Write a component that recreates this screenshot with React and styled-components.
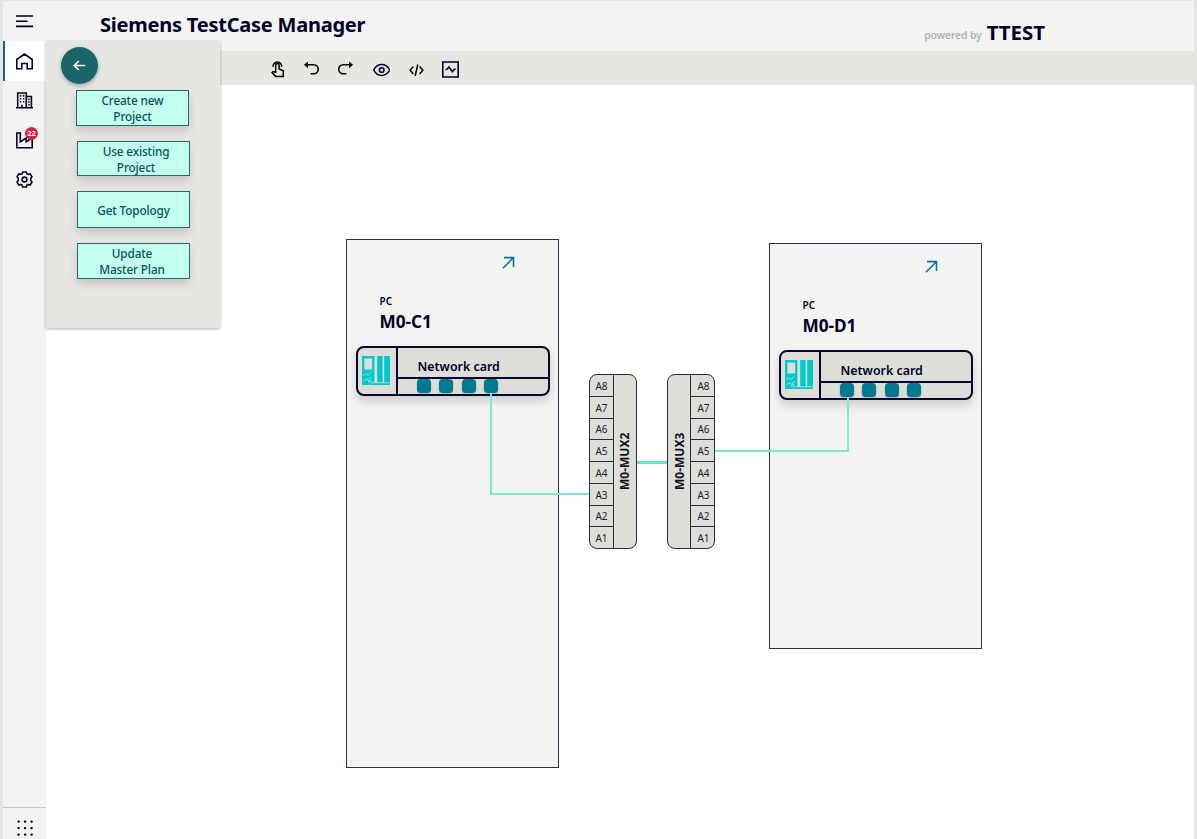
import React from "react";
import styled, { createGlobalStyle } from "styled-components";

const ink = "#000028";
const teal = "#007993";

const GlobalStyle = createGlobalStyle`
  * { box-sizing: border-box; }
  body {
    margin: 0;
    font-family: "Noto Sans", "Open Sans", sans-serif;
    color: ${ink};
    overflow: hidden;
  }
  svg { display: block; flex: none; }
`;

const Frame = styled.div`
  display: flex;
  width: 1197px;
  height: 839px;
  padding: 1px 3px 0;
  background: #e5e5e3;
`;

const Sidebar = styled.nav`
  display: flex;
  flex-direction: column;
  width: 43px;
  background: #f3f3f1;
`;

const NavItem = styled.div`
  position: relative;
  display: flex;
  align-items: center;
  justify-content: center;
  height: ${(p) => p.$height || 39.5}px;
  padding: 1px ${(p) => (p.$active ? 2 : 0)}px 0 0;
  border-left: ${(p) => (p.$active ? "2px solid #1b6468" : "0")};
  background: ${(p) => (p.$active ? "#fff" : "transparent")};
`;

const Badge = styled.span`
  position: absolute;
  top: 7px;
  left: 22px;
  width: 13px;
  height: 13px;
  border-radius: 50%;
  background: #d72339;
  color: #fff;
  font-size: 7.5px;
  font-weight: 700;
  line-height: 13px;
  text-align: center;
`;

const Apps = styled.div`
  display: flex;
  justify-content: center;
  height: 32px;
  margin-top: auto;
  padding: 12px 0 0 1px;
  border-top: 1px solid #c6c6c6;
`;

const Main = styled.div`
  position: relative;
  display: flex;
  flex-direction: column;
  flex: 1;
`;

const Header = styled.header`
  display: flex;
  justify-content: space-between;
  height: 50px;
  padding: 0 149px 0 54px;
  background: #f3f3f1;
`;

const Title = styled.h1`
  margin: 10px 0 0;
  font-size: 20px;
  font-weight: 700;
  line-height: 28px;
  letter-spacing: -0.23px;
  white-space: nowrap;
`;

const Brand = styled.div`
  display: flex;
  align-items: baseline;
  gap: 5px;
  margin-top: 17px;
  line-height: 28px;
  white-space: nowrap;
`;

const Powered = styled.span`
  position: relative;
  top: -1px;
  color: #b1b1b7;
  font-size: 10.3px;
  font-weight: 600;
  letter-spacing: -0.1px;
`;

const BrandName = styled.span`
  font-size: 20.4px;
  font-weight: 700;
`;

const Toolbar = styled.div`
  display: flex;
  align-items: center;
  gap: 17.4px;
  height: 34px;
  padding: 3px 0 0 223px;
  background: #e6e6e2;
`;

const Panel = styled.aside`
  position: absolute;
  top: 40px;
  left: 0;
  display: flex;
  flex-direction: column;
  width: 174px;
  height: 287px;
  padding: 6px 0 0 15px;
  background: #e6e6e2;
  box-shadow: 0 1px 3px rgba(0, 0, 40, 0.3);
`;

const BackButton = styled.button`
  display: flex;
  align-items: center;
  justify-content: center;
  width: 37px;
  height: 37px;
  margin: 0 0 6px;
  padding: 0;
  border: 0;
  border-radius: 50%;
  background: #1b6468;
  box-shadow: 0 2px 4px rgba(0, 0, 40, 0.28);
`;

const Actions = styled.div`
  display: flex;
  flex-direction: column;
  gap: 14.8px;
  padding-left: 16px;
`;

const ActionButton = styled.button`
  width: 113px;
  height: ${(p) => p.$height || 35.8}px;
  margin-left: ${(p) => p.$indent || 0}px;
  padding: 1px ${(p) => p.$right || 0}px 0 ${(p) => p.$left || 0}px;
  border: 1px solid #2b686b;
  background: #c2ffee;
  box-shadow: 0 5px 8px rgba(70, 40, 50, 0.17);
  color: #0b5259;
  font: 500 11.8px/16px "Noto Sans", sans-serif;
  letter-spacing: -0.16px;
  white-space: pre-line;
`;

const Canvas = styled.main`
  position: relative;
  flex: 1;
  background: #fff;
`;

const Wires = styled.svg`
  position: absolute;
  top: 0;
  left: 0;
`;

const PcNode = styled.section`
  position: absolute;
  left: ${(p) => p.$x}px;
  top: ${(p) => p.$y}px;
  width: 213px;
  height: ${(p) => p.$height}px;
  padding: 16px 0 0 9px;
  border: 1px solid #30304e;
  background: #f3f3f1;
`;

const OpenLink = styled.div`
  display: flex;
  justify-content: flex-end;
  height: 37px;
  padding-right: 43px;
`;

const Kind = styled.div`
  padding-left: 23.5px;
  font-size: 10px;
  font-weight: 600;
  line-height: 16px;
`;

const PcName = styled.div`
  padding: 1px 0 0 23.5px;
  font-size: 17.2px;
  font-weight: 700;
  line-height: 24px;
`;

const NetworkCard = styled.div`
  display: flex;
  width: 194px;
  height: 50px;
  margin-top: 12px;
  border: 2px solid #07072f;
  border-radius: 8px;
  background: #deded9;
  box-shadow: 0 5px 10px rgba(0, 0, 40, 0.16);
`;

const CardIcon = styled.div`
  width: 40px;
  padding: 8px 0 0 4px;
  border-right: 2px solid #07072f;
`;

const CardBody = styled.div`
  flex: 1;
`;

const CardName = styled.div`
  height: 31px;
  padding: 10px 0 0 19.5px;
  border-bottom: 2px solid #07072f;
  font-size: 12.4px;
  font-weight: 600;
  line-height: 18px;
  white-space: nowrap;
`;

const Ports = styled.div`
  display: flex;
  gap: 8.3px;
  padding: 0 0 0 19px;
`;

const Port = styled.span`
  width: 14px;
  height: 14px;
  border-radius: 4px;
  background: ${teal};
  box-shadow: 0 1px 2px rgba(0, 40, 60, 0.3);
`;

const Mux = styled.section`
  position: absolute;
  left: ${(p) => p.$x}px;
  top: 289px;
  display: flex;
  flex-direction: ${(p) => (p.$mirrored ? "row-reverse" : "row")};
  width: 48px;
  height: 175px;
  border: 1px solid #2a2a3c;
  border-radius: 8px;
  background: #deded9;
`;

const Slots = styled.div`
  display: flex;
  flex-direction: column;
  width: 24px;
  border: solid #2a2a3c;
  border-width: ${(p) => (p.$mirrored ? "0 0 0 1px" : "0 1px 0 0")};
`;

const Slot = styled.div`
  display: flex;
  align-items: center;
  justify-content: center;
  flex: 1;
  padding: 1px 0 0 ${(p) => (p.$mirrored ? 2 : 0)}px;
  font-size: 10px;
  line-height: 12px;
  color: #20202c;

  & + & { border-top: 1px solid #2a2a3c; }
`;

const MuxName = styled.div`
  display: flex;
  align-items: center;
  justify-content: center;
  flex: 1;
  padding-right: ${(p) => (p.$mirrored ? 2 : 0)}px;
  writing-mode: vertical-rl;
  transform: rotate(180deg);
  color: #11111c;
  font-size: 12px;
  font-weight: 700;
  line-height: 20px;
  white-space: nowrap;
`;

const Icon = ({ w = 17, h = w, box = "0 0 17 17", color = ink, stroke = 1.6, children }) => (
  <svg width={w} height={h} viewBox={box} fill="none" stroke={color} strokeWidth={stroke}>
    {children}
  </svg>
);

const MenuIcon = () => (
  <Icon><path d="M0 3H17M0 8.2H11.5M0 13.4H17" /></Icon>
);
const HomeIcon = () => (
  <Icon><path d="M.8 6.5 8.5 1l7.7 5.5v9.3h-5v-5.3H5.8v5.3h-5Z" /></Icon>
);
const BuildingIcon = () => (
  <Icon>
    <path d="M0 15.8H17M1.7 15.5V1H10.3V15.5M10.3 4.5H15.4V15.5M6 15.5V12.8" />
    <path d="M3.8 3.9H5.3M6.9 3.9H8.4M3.8 6.8H5.3M6.9 6.8H8.4M3.8 9.7H5.3M6.9 9.7H8.4M12.2 7.3H13.7M12.2 10H13.7M12.2 12.8H13.7" />
  </Icon>
);
const FactoryIcon = () => (
  <Icon><path d="M.8 1H4.3V9.8L10.2 6V9.8L16.2 6V15.8H.8Z" /></Icon>
);
const GearIcon = () => (
  <Icon>
    <path
      strokeLinejoin="round"
      d="M6.7 1H10.3L10.8 2.7 12.3 3.4 14.1 2.7 16 5.8 14.7 7.3V9.5L16 11 14.1 14.1 12.3 13.4 10.8 14.2 10.3 16H6.7L6.2 14.2 4.7 13.4 2.9 14.1 1 11 2.3 9.5V7.3L1 5.8 2.9 2.7 4.7 3.4 6.2 2.7Z"
    />
    <circle cx="8.5" cy="8.5" r="2.4" />
  </Icon>
);
const AppsIcon = () => (
  <svg width="17" height="17" viewBox="0 0 17 17" fill={ink}>
    {[1.6, 8.1, 14.6].map((y) =>
      [1.6, 8.1, 14.6].map((x) => <circle key={`${x}-${y}`} cx={x} cy={y} r="1.2" />)
    )}
  </svg>
);

const TouchIcon = () => (
  <Icon color="#000" stroke={1.5}>
    <g transform="translate(0 -.5)">
      <path d="M4.1 6.4A4.3 4.3 0 1 1 12.6 6.4M6.7 11.8V4.6a1.7 1.7 0 0 1 3.4 0V8.4L14.3 10.3V15.9H6.8L3 12.1 4.2 11Z" />
    </g>
  </Icon>
);
const UndoIcon = () => (
  <Icon color="#000" stroke={1.6}>
    <path d="M3 3.8H10.8a4.4 4.4 0 0 1 0 8.9H7.6" />
    <path d="M5 .5V7.2L.9 3.8Z" fill="#000" stroke="none" />
  </Icon>
);
const RedoIcon = () => (
  <Icon color="#000" stroke={1.6}>
    <path d="M12 3.8H5.2a4.4 4.4 0 0 0 0 8.9H8.4" />
    <path d="M11 .5V7.2L15.1 3.8Z" fill="#000" stroke="none" />
  </Icon>
);
const EyeIcon = () => (
  <Icon w={18} h={17} box="-.7 -.5 18 17">
    <path d="M1 8.5C4.8 1.2 13.2 1.2 17 8.5 13.2 15.8 4.8 15.8 1 8.5Z" />
    <circle cx="9" cy="8.5" r="2.3" />
  </Icon>
);
const CodeIcon = () => (
  <Icon color="#000" stroke={1.5} box="0 -.5 17 17">
    <path d="M5.3 5 2.2 8.7 5.3 12.4M11.7 5 14.8 8.7 11.7 12.4M9.8 3 7.2 14.4" />
  </Icon>
);
const PulseIcon = () => (
  <Icon>
    <path d="M.8 1H16.2V16H.8ZM3.6 8.5H4.6L7 5.9 10.3 10.6 12.4 8.2H13.6" />
  </Icon>
);
const BackIcon = () => (
  <Icon w={13} h={11} box="0 0 13 11" color="#fff" stroke={1.7}>
    <path d="M12.3 5.5H1.5M5.7 1 1.3 5.5 5.7 10" />
  </Icon>
);
const OpenIcon = () => (
  <Icon w={13} box="0 0 13 13" color={teal}>
    <path d="M2 1.6H11.5V11M11.3 1.8 .9 12.2" />
  </Icon>
);
const DeviceIcon = () => (
  <svg width="29" height="29" viewBox="0 0 29 29" fill="#00c8cc">
    <path fillRule="evenodd" d="M0 0H12.4V26.4H9L7 29H0ZM2.4 2.6V13.6H10.1V2.6Z" />
    <path d="M15.2 0H20.6V26.4H15.2ZM22.2 0H28V26.4H22.2ZM8.5 27.3H28V29H7.5Z" />
    <path stroke="#deded9" strokeWidth=".8" fill="none" d="M1.5 20 4 17.5 6 19.5 9 16.5M1.5 25.5 4 22.5 6.5 24.5 9.5 21M7 27V25H10" />
  </svg>
);

const navigation = [
  { id: "home", Glyph: HomeIcon, active: true },
  { id: "buildings", Glyph: BuildingIcon },
  { id: "plants", Glyph: FactoryIcon, count: 22 },
  { id: "settings", Glyph: GearIcon },
];

const slotNames = ["A8", "A7", "A6", "A5", "A4", "A3", "A2", "A1"];

function Pc({ name, x, y, height }) {
  return (
    <PcNode $x={x} $y={y} $height={height}>
      <OpenLink><OpenIcon /></OpenLink>
      <Kind>PC</Kind>
      <PcName>{name}</PcName>
      <NetworkCard>
        <CardIcon><DeviceIcon /></CardIcon>
        <CardBody>
          <CardName>Network card</CardName>
          <Ports>{[0, 1, 2, 3].map((n) => <Port key={n} />)}</Ports>
        </CardBody>
      </NetworkCard>
    </PcNode>
  );
}

function Multiplexer({ name, x, mirrored }) {
  return (
    <Mux $x={x} $mirrored={mirrored}>
      <Slots $mirrored={mirrored}>
        {slotNames.map((slot) => <Slot key={slot} $mirrored={mirrored}>{slot}</Slot>)}
      </Slots>
      <MuxName $mirrored={mirrored}>{name}</MuxName>
    </Mux>
  );
}

export default function App() {
  return (
    <>
      <GlobalStyle />
      <Frame>
        <Sidebar>
          <NavItem $height={40}><MenuIcon /></NavItem>
          {navigation.map(({ id, Glyph, active, count }) => (
            <NavItem key={id} $active={active}>
              <Glyph />
              {count && <Badge>{count}</Badge>}
            </NavItem>
          ))}
          <Apps><AppsIcon /></Apps>
        </Sidebar>
        <Main>
          <Header>
            <Title>Siemens TestCase Manager</Title>
            <Brand>
              <Powered>powered by</Powered>
              <BrandName>TTEST</BrandName>
            </Brand>
          </Header>
          <Toolbar>
            <TouchIcon />
            <UndoIcon />
            <RedoIcon />
            <EyeIcon />
            <CodeIcon />
            <PulseIcon />
          </Toolbar>
          <Canvas>
            <Pc name="M0-C1" x={300} y={154} height={529} />
            <Pc name="M0-D1" x={723} y={158} height={406} />
            <Wires width="1148" height="754" viewBox="46 85 1148 754" fill="none" stroke="#78eccb" strokeWidth="2">
              <path d="M491 393V494H590" />
              <path d="M715 451H848V397" />
              <path d="M637 462.5H668" strokeWidth="3" stroke="#63e6ca" />
            </Wires>
            <Multiplexer name="M0-MUX2" x={543} />
            <Multiplexer name="M0-MUX3" x={621} mirrored />
          </Canvas>
          <Panel>
            <BackButton aria-label="Back"><BackIcon /></BackButton>
            <Actions>
              <ActionButton $indent={-1}>{"Create new\nProject"}</ActionButton>
              <ActionButton $left={5}>{"Use existing\nProject"}</ActionButton>
              <ActionButton $height={37}>Get Topology</ActionButton>
              <ActionButton $right={3}>{"Update\nMaster Plan"}</ActionButton>
            </Actions>
          </Panel>
        </Main>
      </Frame>
    </>
  );
}
